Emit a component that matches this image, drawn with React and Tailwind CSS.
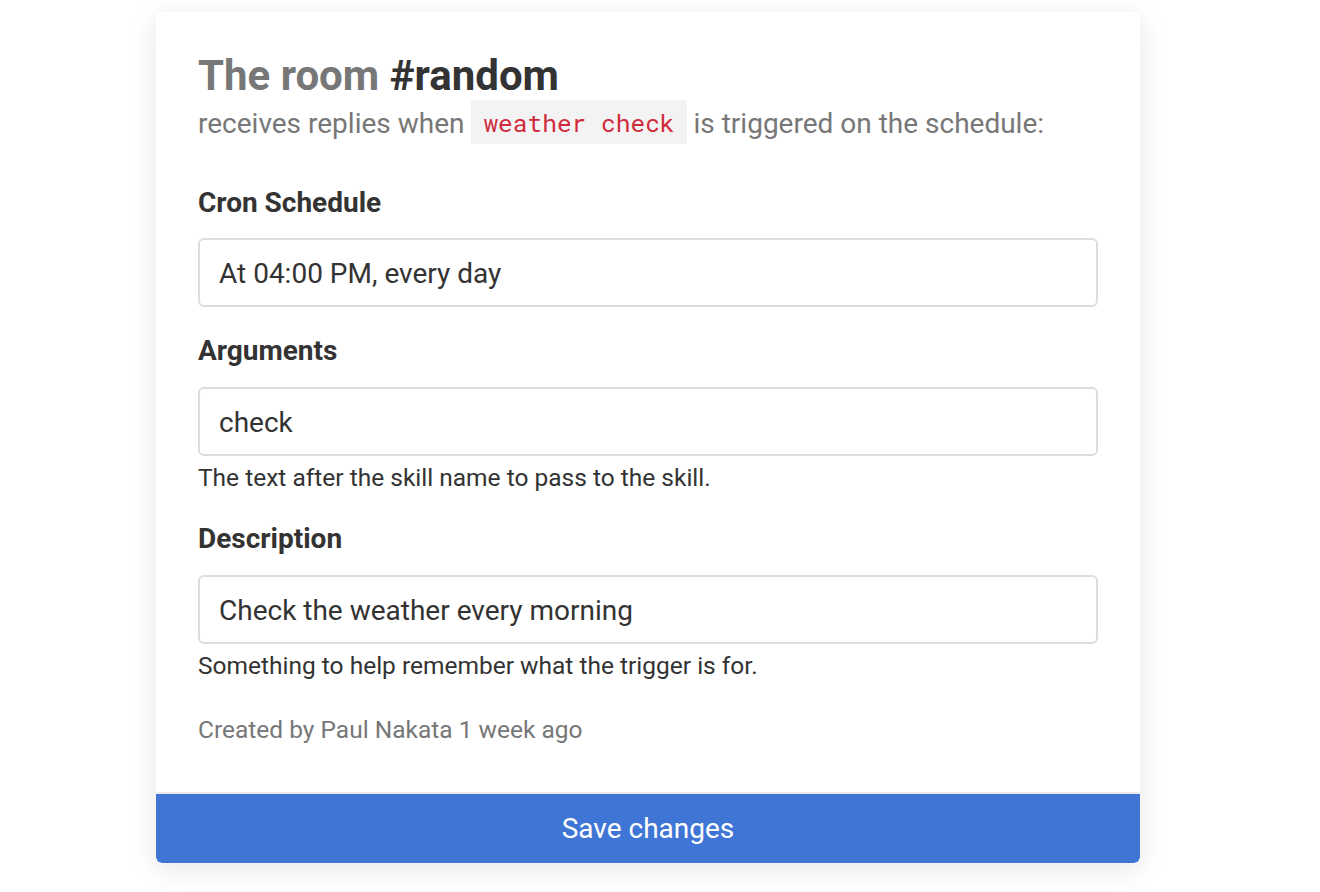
export default function App() {
  const font = { fontFamily: "Roboto, 'Noto Sans', sans-serif" };
  return (
    <div className="min-h-screen bg-white pt-3 pl-[156px]" style={font}>
      <div className="w-[984px] h-[851px] rounded-md bg-white shadow-[0_6px_28px_rgba(0,0,0,0.10)] flex flex-col overflow-hidden">
        <div className="flex-1 px-[42px] pt-[40px]">
          <h1 className="text-[42px] leading-[48px] font-bold text-[#777777]">
            The room <span className="text-[#333333]">#random</span>
          </h1>
          <p className="text-[28px] leading-[48px] h-[44px] text-[#777777]">
            receives replies when{" "}
            <code className="inline-block align-top bg-[#f3f3f3] text-[#d12a3c] px-3 leading-[46px] h-[44px] text-[24.5px]" style={{ fontFamily: "'Roboto Mono', 'DejaVu Sans Mono', 'Liberation Mono', monospace" }}>weather check</code>{" "}
            is triggered on the schedule:
          </p>

          <div className="mt-[43px]">
            <label className="block text-[28px] leading-[32px] font-bold text-[#333333]">Cron Schedule</label>
            <div className="mt-[19px] h-[69px] border-2 border-[#dddddd] rounded-md flex items-center px-[19px] pt-[3px] text-[28px] text-[#333333]">
              At 04:00 PM, every day
            </div>
          </div>

          <div className="mt-[28px]">
            <label className="block text-[28px] leading-[32px] font-bold text-[#333333]">Arguments</label>
            <div className="mt-[20px] h-[69px] border-2 border-[#dddddd] rounded-md flex items-center px-[19px] pt-[3px] text-[28px] text-[#333333]">
              check
            </div>
            <p className="text-[24.5px] leading-[44px] text-[#333333]">The text after the skill name to pass to the skill.</p>
          </div>

          <div className="mt-[23px]">
            <label className="block text-[28px] leading-[32px] font-bold text-[#333333]">Description</label>
            <div className="mt-[20px] h-[69px] border-2 border-[#dddddd] rounded-md flex items-center px-[19px] pt-[3px] text-[28px] text-[#333333]">
              Check the weather every morning
            </div>
            <p className="text-[24.5px] leading-[44px] text-[#333333]">Something to help remember what the trigger is for.</p>
          </div>

          <p className="mt-[20px] text-[24.5px] leading-[44px] text-[#777777]">Created by Paul Nakata 1 week ago</p>
        </div>
        <div className="h-[2px] bg-[#ebebeb]"></div>
        <button className="h-[69px] w-full bg-[#3f76d6] text-white text-[28px] rounded-b-md">Save changes</button>
      </div>
    </div>
  );
}
